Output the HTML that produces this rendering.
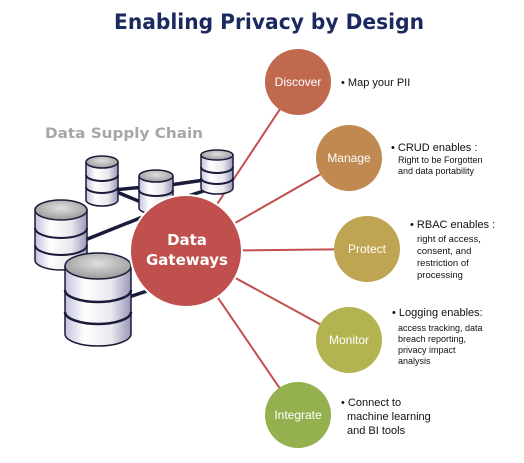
<!DOCTYPE html>
<html><head><style>
body{margin:0;background:#fff;width:524px;height:463px;overflow:hidden}
svg{display:block}
text{font-family:"Liberation Sans",sans-serif}
.dj{font-family:"DejaVu Sans","Liberation Sans",sans-serif}
</style></head><body>
<svg width="524" height="463" viewBox="0 0 524 463">
<defs>
<linearGradient id="cyl" x1="0" x2="1" y1="0" y2="0">
<stop offset="0" stop-color="#c4c2dc"/><stop offset="0.3" stop-color="#ffffff"/><stop offset="0.7" stop-color="#e8e8ee"/><stop offset="1" stop-color="#9a98b8"/></linearGradient>
<radialGradient id="top" cx="0.5" cy="0.4" r="0.6"><stop offset="0" stop-color="#e0e0e0"/><stop offset="1" stop-color="#9a9a9a"/></radialGradient>
</defs>
<text class="dj" x="269" y="29" text-anchor="middle" font-size="21" font-weight="bold" fill="#1b2a5e" textLength="310" lengthAdjust="spacingAndGlyphs">Enabling Privacy by Design</text>
<text class="dj" x="45" y="138" font-size="14.5" font-weight="bold" fill="#a6a6a6" textLength="158" lengthAdjust="spacingAndGlyphs">Data Supply Chain</text>
<g stroke="#1a1a3a" stroke-width="3.5">
<line x1="112" y1="190" x2="157" y2="186"/><line x1="112" y1="190" x2="160" y2="210"/>
<line x1="170" y1="185" x2="218" y2="178"/><line x1="185" y1="197" x2="222" y2="185"/>
<line x1="85" y1="240" x2="160" y2="210"/><line x1="120" y1="300" x2="150" y2="290"/>
</g>
<g fill="none" stroke="#c0504d" stroke-width="2">
<line x1="186" y1="251" x2="298" y2="82"/><line x1="186" y1="251" x2="349" y2="158"/>
<line x1="186" y1="251" x2="367" y2="249"/><line x1="186" y1="251" x2="349" y2="340"/>
<line x1="186" y1="251" x2="298" y2="415"/>
</g>
<g stroke="#1a1a3a" stroke-width="1.5">
<g><path d="M86 162 v38 a16 6 0 0 0 32 0 v-38" fill="url(#cyl)"/><path d="M86 175 a16 6 0 0 0 32 0 M86 187 a16 6 0 0 0 32 0" fill="none" stroke-width="2"/><ellipse cx="102" cy="162" rx="16" ry="6" fill="url(#top)"/></g>
<g><path d="M139 176 v32 a17 6 0 0 0 34 0 v-32" fill="url(#cyl)"/><path d="M139 190 a17 6 0 0 0 34 0" fill="none" stroke-width="2"/><ellipse cx="156" cy="176" rx="17" ry="6" fill="url(#top)"/></g>
<g><path d="M201 155 v33 a16 6 0 0 0 32 0 v-33" fill="url(#cyl)"/><path d="M201 167 a16 6 0 0 0 32 0 M201 178 a16 6 0 0 0 32 0" fill="none" stroke-width="2"/><ellipse cx="217" cy="155" rx="16" ry="5" fill="url(#top)"/></g>
<g><path d="M35 210 v50 a26 10 0 0 0 52 0 v-50" fill="url(#cyl)"/><path d="M35 228 a26 10 0 0 0 52 0 M35 245 a26 10 0 0 0 52 0" fill="none" stroke-width="2"/><ellipse cx="61" cy="210" rx="26" ry="10" fill="url(#top)"/></g>
<g><path d="M65 266 v68 a33 12 0 0 0 66 0 v-68" fill="url(#cyl)"/><path d="M65 290 a33 12 0 0 0 66 0 M65 312 a33 12 0 0 0 66 0" fill="none" stroke-width="2.5"/><ellipse cx="98" cy="266" rx="33" ry="13" fill="url(#top)"/></g>
</g>
<circle cx="186" cy="251" r="56" fill="#c0504d" stroke="#fff" stroke-width="2"/>
<text class="dj" x="187" y="245" text-anchor="middle" font-size="15" font-weight="bold" fill="#fff">Data</text>
<text class="dj" x="187" y="265" text-anchor="middle" font-size="15" font-weight="bold" fill="#fff">Gateways</text>
<g font-size="12" fill="#fff" text-anchor="middle">
<circle cx="298" cy="82" r="33" fill="#c0694e"/><text x="298" y="86">Discover</text>
<circle cx="349" cy="158" r="33" fill="#c0894f"/><text x="349" y="162">Manage</text>
<circle cx="367" cy="249" r="33" fill="#bfa551"/><text x="367" y="253">Protect</text>
<circle cx="349" cy="340" r="33" fill="#b3b451"/><text x="349" y="344">Monitor</text>
<circle cx="298" cy="415" r="33" fill="#94b04f"/><text x="298" y="419">Integrate</text>
</g>
<g fill="#111" font-size="10">
<text x="341" y="86" font-size="11">• Map your PII</text>
<text x="391" y="151" font-size="11">• CRUD enables :</text>
<text x="398" y="163" font-size="9">Right to be Forgotten</text>
<text x="398" y="174" font-size="9">and data portability</text>
<text x="410" y="228" font-size="11">• RBAC enables :</text>
<text x="417" y="242" font-size="9.5">right of access,</text>
<text x="417" y="254" font-size="9.5">consent, and</text>
<text x="417" y="266" font-size="9.5">restriction of</text>
<text x="417" y="278" font-size="9.5">processing</text>
<text x="392" y="316" font-size="11">• Logging enables:</text>
<text x="398" y="331" font-size="9">access tracking, data</text>
<text x="398" y="342" font-size="9">breach reporting,</text>
<text x="398" y="353" font-size="9">privacy impact</text>
<text x="398" y="364" font-size="9">analysis</text>
<text x="341" y="406" font-size="11">• Connect to</text>
<text x="347" y="420" font-size="11">machine learning</text>
<text x="347" y="434" font-size="11">and BI tools</text>
</g>
</svg>
</body></html>
